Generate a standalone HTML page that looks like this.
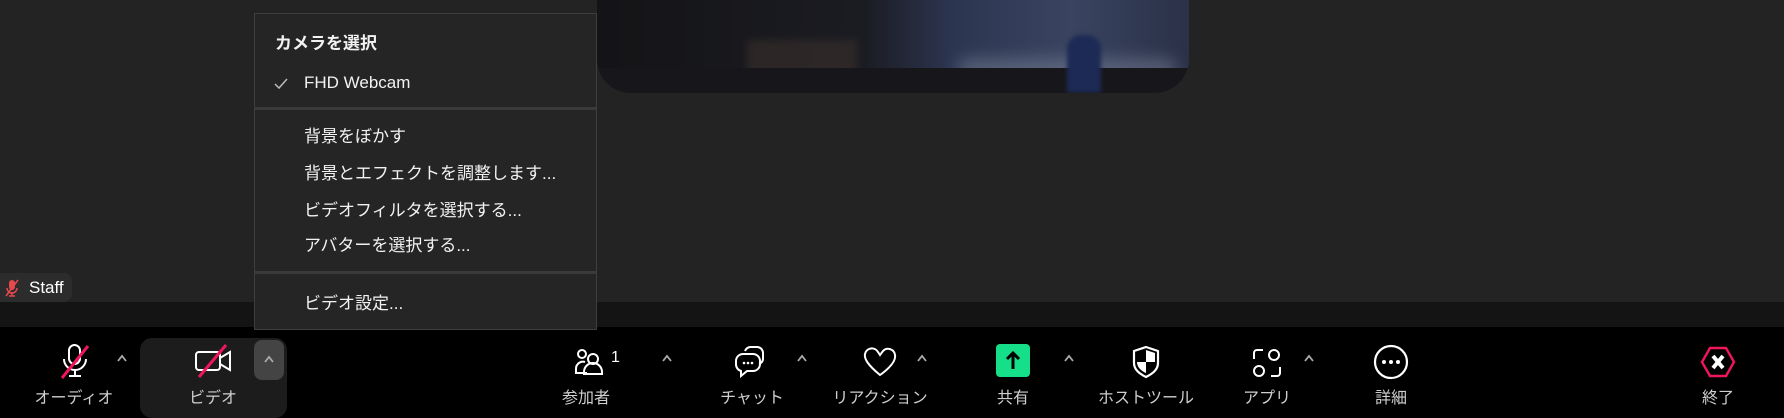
<!DOCTYPE html>
<html style="background:#000"><head><meta charset="utf-8"><style>
*{margin:0;padding:0;box-sizing:border-box}
body{width:1784px;height:409px;background:#232323;position:relative;overflow:hidden;font-family:"Liberation Sans","Noto Sans CJK JP",sans-serif;color:#fff}
.a{position:absolute}
.strip{left:0;top:302px;width:1784px;height:25px;background:#141414}
.bar{left:0;top:327px;width:1784px;height:82px;background:#000}
.video{left:597px;top:-20px;width:592px;height:113px;border-radius:0 0 34px 34px;background:linear-gradient(90deg,#141417 0%,#1b1c22 45%,#2c3550 60%,#3a4460 80%,#2a3148 100%);overflow:hidden}
.menu{left:254px;top:13px;width:343px;height:317px;background:#252525;border:1px solid #3e3e3e}
.sep{position:absolute;left:0;width:341px;height:3px;background:#3a3a3a}
.mi{position:absolute;font-size:17px;color:#f2f2f2;white-space:nowrap;line-height:20px}
.lbl{position:absolute;top:384px;font-size:16px;color:#cfcfcf;transform:translateX(-50%);white-space:nowrap}
.car{position:absolute;top:354px;width:12px;height:8px;transform:translateX(-50%)}
.ic{position:absolute}
</style></head><body>
<div class="a video">
 <div class="a" style="left:360px;top:78px;width:220px;height:24px;background:#9aa3b5;opacity:.35;border-radius:20px;filter:blur(8px)"></div>
 <div class="a" style="left:150px;top:60px;width:110px;height:36px;background:#3a302c;opacity:.6;filter:blur(4px)"></div>
 <div class="a" style="left:0;top:88px;width:592px;height:25px;background:#17161a"></div>
 <div class="a" style="left:470px;top:55px;width:34px;height:58px;background:#1c2a55;border-radius:14px 14px 0 0;filter:blur(2px)"></div>
</div>
<div class="a strip"></div>
<div class="a" style="left:0;top:273px;width:72px;height:29px;background:#2c2c2c;border-radius:0 8px 8px 0"></div>
<svg class="a" style="left:4px;top:279px" width="16" height="18" viewBox="0 0 16 18"><rect x="5" y="1" width="6" height="10" rx="3" fill="#e5484d"/><path d="M3 9a5 5 0 0 0 10 0M8 14v3M5 17h6" stroke="#e5484d" stroke-width="1.5" fill="none"/><path d="M2 17L14 1" stroke="#e5484d" stroke-width="1.6"/></svg>
<div class="a" style="left:29px;top:278px;font-size:17px">Staff</div>
<div class="a bar"></div>
<div class="a menu">
 <div class="mi" style="left:20px;top:20px;font-weight:bold">カメラを選択</div>
 <svg class="a" style="left:19px;top:64px" width="14" height="12" viewBox="0 0 14 12"><path d="M1 6l4 4 8-9" stroke="#bbb" stroke-width="1.5" fill="none"/></svg>
 <div class="mi" style="left:49px;top:59px">FHD Webcam</div>
 <div class="sep" style="top:93px"></div>
 <div class="mi" style="left:49px;top:113px">背景をぼかす</div>
 <div class="mi" style="left:49px;top:150px">背景とエフェクトを調整します...</div>
 <div class="mi" style="left:49px;top:187px">ビデオフィルタを選択する...</div>
 <div class="mi" style="left:49px;top:222px">アバターを選択する...</div>
 <div class="sep" style="top:257px"></div>
 <div class="mi" style="left:49px;top:280px">ビデオ設定...</div>
</div>
<div class="a" style="left:140px;top:338px;width:147px;height:80px;background:#1c1c1c;border-radius:12px"></div>
<div class="a" style="left:254px;top:340px;width:30px;height:40px;background:#444;border-radius:8px"></div>
<svg width="0" height="0" style="position:absolute"><defs><symbol id="c" viewBox="0 0 12 8"><path d="M2 7l4-5 4 5" stroke="#aaa" stroke-width="1.8" fill="none"/></symbol></defs></svg>
<svg class="ic" style="left:58px;top:343px" width="34" height="36" viewBox="0 0 34 36"><rect x="11" y="2" width="11" height="19" rx="5.5" stroke="#fff" stroke-width="2" fill="none"/><path d="M6 16a11 11 0 0 0 22 0M17 27v6M11 33h12" stroke="#fff" stroke-width="2" fill="none"/><path d="M4 35L30 3" stroke="#f0165c" stroke-width="3"/></svg>
<svg class="car" style="left:122px"><use href="#c"/></svg>
<div class="lbl" style="left:74px">オーディオ</div>
<svg class="ic" style="left:194px;top:344px" width="40" height="34" viewBox="0 0 40 34"><rect x="2" y="8" width="24" height="18" rx="3" stroke="#fff" stroke-width="2" fill="none"/><path d="M26 14l10-6v18l-10-6" stroke="#fff" stroke-width="2" fill="none"/><path d="M5 33L32 1" stroke="#f0165c" stroke-width="3"/></svg>
<svg class="car" style="left:269px;top:355px"><use href="#c"/></svg>
<div class="lbl" style="left:213px">ビデオ</div>
<svg class="ic" style="left:573px;top:348px" width="30" height="28" viewBox="0 0 30 28"><circle cx="9" cy="6" r="4" stroke="#fff" stroke-width="2" fill="none"/><circle cx="20" cy="11" r="5" stroke="#fff" stroke-width="2" fill="none"/><path d="M12 14a7 7 0 0 0-9 7v4h11M11 26v-2a9 9 0 0 1 18 0v2z" stroke="#fff" stroke-width="2" fill="none"/></svg>
<div class="a" style="left:611px;top:349px;font-size:16px">1</div>
<svg class="car" style="left:667px"><use href="#c"/></svg>
<div class="lbl" style="left:586px">参加者</div>
<svg class="ic" style="left:733px;top:345px" width="34" height="34" viewBox="0 0 34 34"><path d="M12 6a6 6 0 0 1 6-4h6a6 6 0 0 1 6 6v6a6 6 0 0 1-4 5" stroke="#fff" stroke-width="2" fill="none"/><path d="M10 9h10a7 7 0 0 1 7 7v3a7 7 0 0 1-7 7h-6l-6 5v-5a7 7 0 0 1-5-7v-3a7 7 0 0 1 7-7z" stroke="#fff" stroke-width="2" fill="none"/><circle cx="11" cy="18" r="1.3" fill="#fff"/><circle cx="15" cy="18" r="1.3" fill="#fff"/><circle cx="19" cy="18" r="1.3" fill="#fff"/></svg>
<svg class="car" style="left:802px"><use href="#c"/></svg>
<div class="lbl" style="left:752px">チャット</div>
<svg class="ic" style="left:862px;top:345px" width="36" height="34" viewBox="0 0 36 34"><path d="M18 30C6 20 2 14 3 9a7 7 0 0 1 13-2l2 3 3-4a7 7 0 0 1 12 4c1 5-4 12-15 20z" stroke="#fff" stroke-width="2" fill="none"/></svg>
<svg class="car" style="left:922px"><use href="#c"/></svg>
<div class="lbl" style="left:880px">リアクション</div>
<div class="a" style="left:996px;top:344px;width:34px;height:33px;background:#15e089;border-radius:4px"></div>
<svg class="ic" style="left:996px;top:344px" width="34" height="33" viewBox="0 0 34 33"><path d="M17 25V10M11 15l6-6 6 6" stroke="#000" stroke-width="3" fill="none"/></svg>
<svg class="car" style="left:1069px"><use href="#c"/></svg>
<div class="lbl" style="left:1013px">共有</div>
<svg class="ic" style="left:1131px;top:345px" width="30" height="34" viewBox="0 0 30 34"><path d="M15 2l12 4v12c0 7-6 11-12 14C9 29 3 25 3 18V6z" stroke="#fff" stroke-width="2.2" fill="none"/><path d="M15 5l9 3v9h-9z M15 17H6c0 5 4 9 9 11z" fill="#fff"/></svg>
<div class="lbl" style="left:1146px">ホストツール</div>
<svg class="ic" style="left:1251px;top:347px" width="32" height="32" viewBox="0 0 32 32"><path d="M12 3H6a3 3 0 0 0-3 3v6M29 20v6a3 3 0 0 1-3 3h-6" stroke="#fff" stroke-width="2" fill="none"/><circle cx="23" cy="8" r="5" stroke="#fff" stroke-width="2" fill="none"/><circle cx="8" cy="24" r="5" stroke="#fff" stroke-width="2" fill="none"/></svg>
<svg class="car" style="left:1309px"><use href="#c"/></svg>
<div class="lbl" style="left:1267px">アプリ</div>
<svg class="ic" style="left:1373px;top:344px" width="36" height="36" viewBox="0 0 36 36"><circle cx="18" cy="18" r="16" stroke="#fff" stroke-width="2.2" fill="none"/><circle cx="11" cy="18" r="2" fill="#fff"/><circle cx="18" cy="18" r="2" fill="#fff"/><circle cx="25" cy="18" r="2" fill="#fff"/></svg>
<div class="lbl" style="left:1391px">詳細</div>
<svg class="ic" style="left:1700px;top:346px" width="36" height="32" viewBox="0 0 36 32"><path d="M10 2h16l8 14-8 14H10L2 16z" stroke="#f0165c" stroke-width="2.4" fill="none"/><path d="M13 10l10 12M23 10L13 22" stroke="#fff" stroke-width="4"/></svg>
<div class="lbl" style="left:1718px">終了</div>
</body></html>
